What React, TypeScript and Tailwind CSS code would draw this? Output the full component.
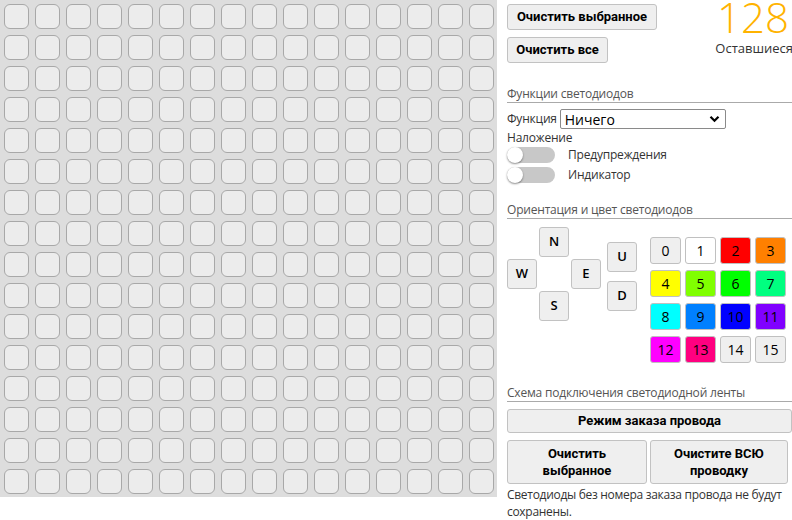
import React from "react";

const sans = { fontFamily: '"Open Sans", "Noto Sans", sans-serif' };
const bold = { fontFamily: 'Roboto, "Liberation Sans", Arial, sans-serif' };

const colors: { n: number; bg: string }[] = [
  { n: 0, bg: "bg-[#efefef]" },
  { n: 1, bg: "bg-white" },
  { n: 2, bg: "bg-[#ff0000]" },
  { n: 3, bg: "bg-[#ff8000]" },
  { n: 4, bg: "bg-[#ffff00]" },
  { n: 5, bg: "bg-[#80ff00]" },
  { n: 6, bg: "bg-[#00ff00]" },
  { n: 7, bg: "bg-[#00ff80]" },
  { n: 8, bg: "bg-[#00ffff]" },
  { n: 9, bg: "bg-[#0080ff]" },
  { n: 10, bg: "bg-[#0000ff]" },
  { n: 11, bg: "bg-[#8000ff]" },
  { n: 12, bg: "bg-[#ff00ff]" },
  { n: 13, bg: "bg-[#ff0080]" },
  { n: 14, bg: "bg-[#efefef]" },
  { n: 15, bg: "bg-[#efefef]" },
];

function Heading({ children, className }: { children: React.ReactNode; className: string }) {
  return (
    <div
      className={`text-[12px] tracking-[-0.2px] leading-[16px] text-[#555] border-b border-[#aaa] whitespace-nowrap ${className}`}
      style={sans}
    >
      {children}
    </div>
  );
}

function Toggle({ label, className }: { label: string; className: string }) {
  return (
    <div className={`flex items-center h-[16px] ${className}`}>
      <div className="w-[48px] h-[16px] rounded-full bg-[#c8c8c8] flex items-center">
        <div className="w-[16px] h-[16px] rounded-full bg-white shadow-[0_1px_2px_rgba(0,0,0,0.45)]" />
      </div>
      <span className="ml-[13px] text-[12px] tracking-[-0.2px] text-[#333]" style={sans}>
        {label}
      </span>
    </div>
  );
}

function Dir({ l, className }: { l: string; className: string }) {
  return (
    <div
      className={`w-[30px] h-[30px] bg-[#efefef] border border-[#c2c2c2] rounded-[3px] flex items-center justify-center text-[13px] font-semibold text-black ${className}`}
      style={sans}
    >
      {l}
    </div>
  );
}

export default function App() {
  const cells = Array.from({ length: 256 }, (_, i) => i);
  return (
    <div className="w-[792px] h-[520px] bg-white flex overflow-hidden">
      <div className="w-[497px] h-[497px] bg-[#dddddd] pl-[4px] pt-[4px] shrink-0">
        <div className="grid grid-cols-[repeat(16,25px)] grid-rows-[repeat(16,25px)] gap-[6px]">
          {cells.map((i) => (
            <div key={i} className="bg-[#ececec] border border-[#a8a8a8] rounded-[6px]" />
          ))}
        </div>
      </div>
      <div className="ml-[10px] w-[285px] flex flex-col shrink-0">
        <div className="flex justify-between">
          <div className="flex flex-col gap-[7px] pt-[4px]">
            <button
              className="w-[150px] h-[26px] bg-[#efefef] border border-[#c2c2c2] rounded-[3px] text-[13px] font-bold text-black whitespace-nowrap"
              style={bold}
            >
              Очистить выбранное
            </button>
            <button
              className="w-[101px] h-[26px] bg-[#efefef] border border-[#c2c2c2] rounded-[3px] text-[13px] font-bold text-black whitespace-nowrap"
              style={bold}
            >
              Очистить все
            </button>
          </div>
          <div className="flex flex-col items-end">
            <div className="text-[42px] leading-[34px] font-light text-[#ffb300] mr-[3px]" style={sans}>
              128
            </div>
            <div className="text-[13px] leading-[20px] text-[#333] mt-[4px] -mr-[1px]" style={sans}>
              Оставшиеся
            </div>
          </div>
        </div>

        <Heading className="mt-[23px]">Функции светодиодов</Heading>

        <div className="flex items-center mt-[6px] h-[20px]">
          <span className="text-[12px] tracking-[-0.2px] text-[#333]" style={sans}>
            Функция
          </span>
          <div className="ml-[3px] w-[166px] h-[20px] border border-[#8a8a8a] rounded-[2px] flex items-center justify-between pl-[4px] pr-[5px] bg-white">
            <span className="text-[14px] text-black" style={sans}>
              Ничего
            </span>
            <svg width="11" height="8" viewBox="0 0 11 8">
              <path d="M1.5 1.8 L5.5 5.8 L9.5 1.8" fill="none" stroke="#000" strokeWidth="2.2" />
            </svg>
          </div>
        </div>

        <div className="text-[12px] tracking-[-0.2px] leading-[16px] text-[#333] mt-[1px]" style={sans}>
          Наложение
        </div>
        <Toggle label="Предупреждения" className="mt-[1px]" />
        <Toggle label="Индикатор" className="mt-[4px]" />

        <Heading className="mt-[19px]">Ориентация и цвет светодиодов</Heading>

        <div className="flex mt-[8px]">
          <div className="grid grid-cols-[repeat(3,30px)] grid-rows-[repeat(3,30px)] gap-[2px]">
            <Dir l="N" className="col-start-2 row-start-1" />
            <Dir l="W" className="col-start-1 row-start-2" />
            <Dir l="E" className="col-start-3 row-start-2" />
            <Dir l="S" className="col-start-2 row-start-3" />
          </div>
          <div className="flex flex-col gap-[9px] ml-[6px] mt-[15px]">
            <Dir l="U" className="" />
            <Dir l="D" className="" />
          </div>
          <div className="grid grid-cols-[repeat(4,31px)] grid-rows-[repeat(4,27px)] gap-x-[4px] gap-y-[6px] ml-[13px] mt-[10px]">
            {colors.map((c) => (
              <div
                key={c.n}
                className={`${c.bg} border border-[#c0c0c0] rounded-[3px] flex items-center justify-center text-[14px] text-black`}
                style={sans}
              >
                {c.n}
              </div>
            ))}
          </div>
        </div>

        <Heading className="mt-[22px]">Схема подключения светодиодной ленты</Heading>

        <button
          className="mt-[7px] w-[285px] h-[26px] bg-[#efefef] border border-[#c2c2c2] rounded-[3px] text-[13px] font-bold text-black"
          style={bold}
        >
          Режим заказа провода
        </button>

        <div className="flex mt-[7px] gap-[3px]">
          <button
            className="w-[140px] h-[44px] bg-[#efefef] border border-[#c2c2c2] rounded-[3px] text-[13px] leading-[17px] font-bold text-black"
            style={bold}
          >
            Очистить
            <br />
            выбранное
          </button>
          <button
            className="w-[138px] h-[44px] bg-[#efefef] border border-[#c2c2c2] rounded-[3px] text-[13px] leading-[17px] font-bold text-black"
            style={bold}
          >
            Очистите ВСЮ
            <br />
            проводку
          </button>
        </div>

        <div className="mt-[2px] text-[12px] tracking-[-0.3px] leading-[17px] text-[#333] whitespace-nowrap" style={sans}>
          Светодиоды без номера заказа провода не будут
          <br />
          сохранены.
        </div>
      </div>
    </div>
  );
}
